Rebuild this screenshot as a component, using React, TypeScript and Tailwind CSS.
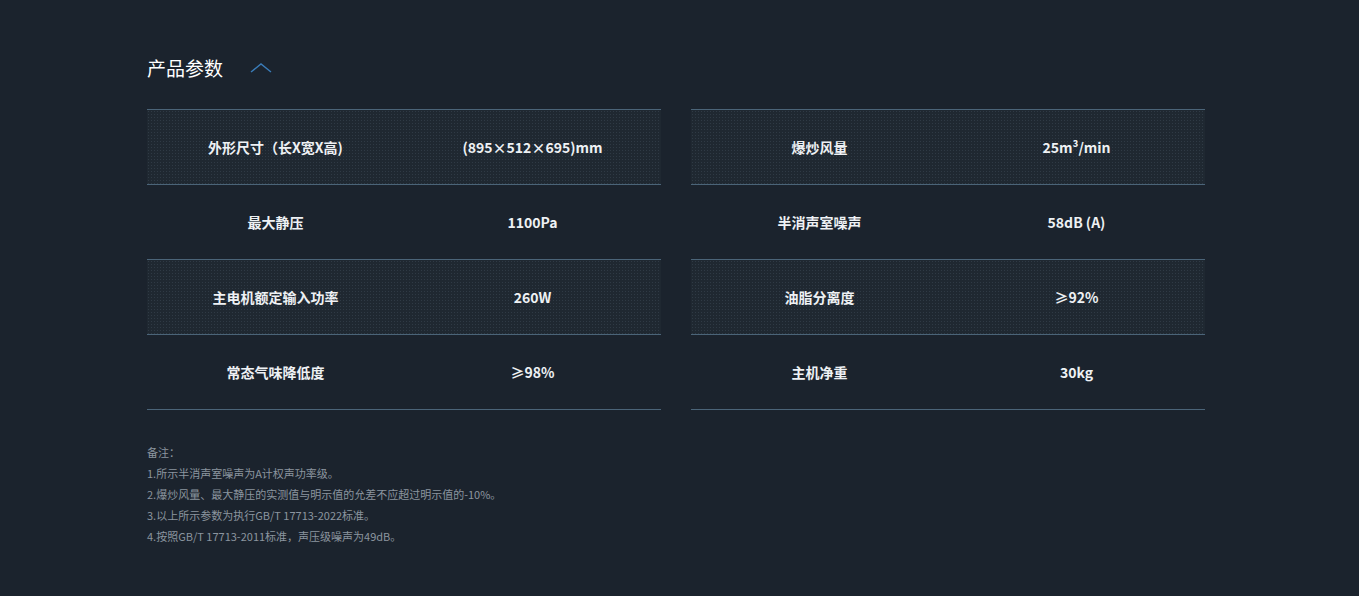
import React from "react";

const left = [
  ["外形尺寸（长X宽X高)", "(895×512×695)mm"],
  ["最大静压", "1100Pa"],
  ["主电机额定输入功率", "260W"],
  ["常态气味降低度", "≥98%"],
];
const right = [
  ["爆炒风量", "25m³/min"],
  ["半消声室噪声", "58dB (A)"],
  ["油脂分离度", "≥92%"],
  ["主机净重", "30kg"],
];

function Table({ rows }: { rows: string[][] }) {
  return (
    <div className="w-[514px] border-t border-[#4b6478]">
      {rows.map((r, i) => (
        <div
          key={i}
          className={`grid grid-cols-2 h-[75px] items-center border-b border-[#4b6478] text-[14px] font-bold text-[#eef1f4] ${
            i % 2 === 0
              ? "bg-[#1f2831] bg-[radial-gradient(#2f3a45_0.7px,transparent_0.8px)] bg-[length:3px_3px]"
              : ""
          }`}
        >
          <div className="text-center">{r[0]}</div>
          <div className="text-center">{r[1]}</div>
        </div>
      ))}
    </div>
  );
}

export default function App() {
  return (
    <div
      className="w-[1359px] h-[596px] bg-[#1b232d] pl-[147px] pt-[54px]"
      style={{ fontFamily: '"Noto Sans CJK SC", "Noto Sans", sans-serif' }}
    >
      <div className="flex items-center h-[28px]">
        <span className="text-[19px] text-white">产品参数</span>
        <svg width="22" height="12" viewBox="0 0 22 12" className="ml-[27px]">
          <path d="M1 10 L11 2 L21 10" stroke="#3a7cb8" strokeWidth="1.4" fill="none" />
        </svg>
      </div>
      <div className="flex gap-[30px] mt-[27px]">
        <Table rows={left} />
        <Table rows={right} />
      </div>
      <div className="mt-[32px] text-[11px] leading-[21px] text-[#8b959f]">
        <div>备注：</div>
        <div>1.所示半消声室噪声为A计权声功率级。</div>
        <div>2.爆炒风量、最大静压的实测值与明示值的允差不应超过明示值的-10%。</div>
        <div>3.以上所示参数为执行GB/T 17713-2022标准。</div>
        <div>4.按照GB/T 17713-2011标准，声压级噪声为49dB。</div>
      </div>
    </div>
  );
}
